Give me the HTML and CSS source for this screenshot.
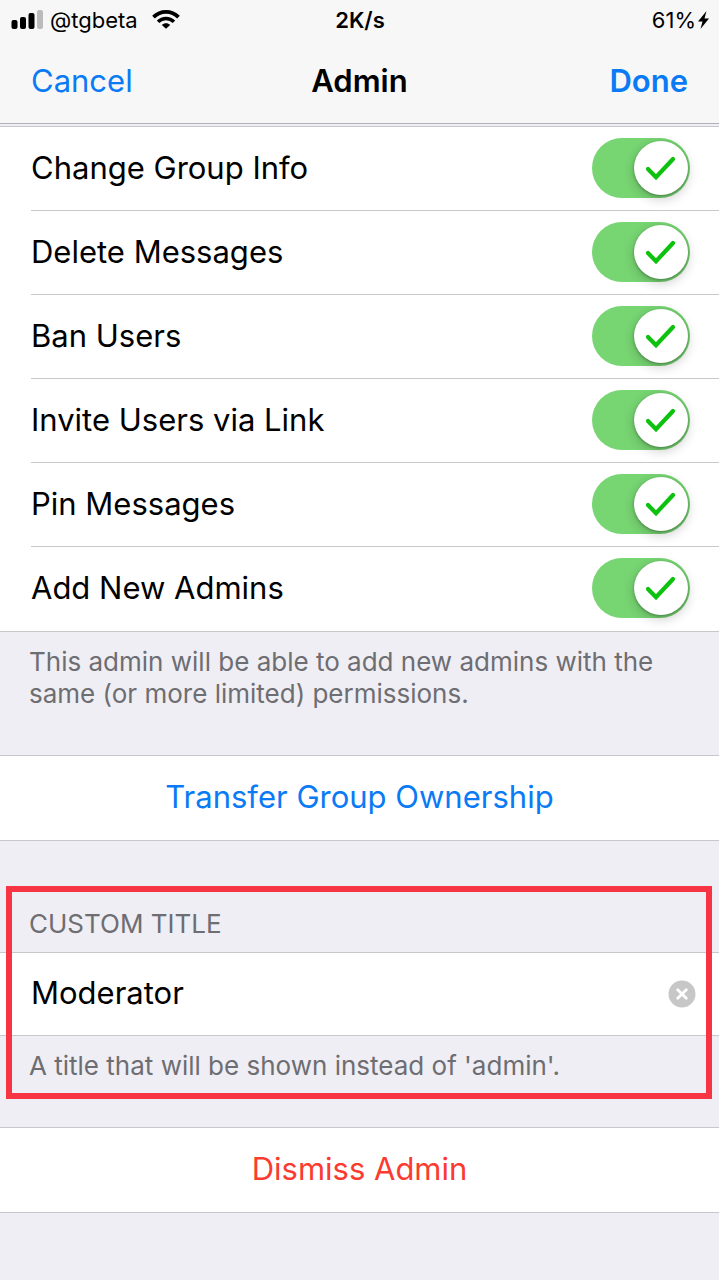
FILE: index.html
```html
<!DOCTYPE html>
<html lang="en">
<head>
    <meta charset="UTF-8">
    <meta name="viewport" content="width=device-width, initial-scale=1.0">
    <title>Admin</title>
    <link rel="stylesheet" href="styles.css">
</head>
<body>
    <svg class="symbols" aria-hidden="true">
        <symbol id="check" viewBox="0 0 54 54">
            <path d="M14 28l8 8.300L39 18" fill="none" stroke="#0dc20d" stroke-width="4.200" stroke-linecap="round"/>
        </symbol>
    </svg>

    <header>
        <div class="status">
            <div class="carrier">
                <svg width="33" height="20" viewBox="0 0 33 20" aria-hidden="true">
                    <rect x="0.500" y="10" width="6" height="9" rx="2"/>
                    <rect x="9" y="7" width="6" height="12" rx="2"/>
                    <rect x="17.500" y="3" width="6" height="16" rx="2"/>
                    <rect x="26" y="0" width="6" height="19" rx="2" fill="#bbb"/>
                </svg>
                <span>@tgbeta</span>
                <svg class="wifi" width="28" height="20" viewBox="0 0 28 20" aria-hidden="true">
                    <path d="M1.500 7.200C8.500 0.200 19.500 0.200 26.500 7.200" fill="none" stroke="#000" stroke-width="3.800"/>
                    <path d="M6 11.800c4.600-4.400 11.400-4.400 16 0" fill="none" stroke="#000" stroke-width="3.600"/>
                    <path d="M9.800 15c2.500-2.400 5.900-2.400 8.400 0L14 18.800z"/>
                </svg>
            </div>
            <strong>2K/s</strong>
            <div class="battery">
                <span>61%</span>
                <svg width="11" height="18" viewBox="0 0 11 18" aria-hidden="true">
                    <path d="M8.500 0L0 10.500h4.500L2.500 18 11 7.500H6.500z"/>
                </svg>
            </div>
        </div>
        <nav>
            <button type="button">Cancel</button>
            <h1>Admin</h1>
            <button type="button" class="done">Done</button>
        </nav>
    </header>

    <main>
        <section class="group">
            <div class="row">
                <label for="info">Change Group Info</label>
                <span class="switch"><input type="checkbox" id="info" checked><svg><use href="#check"/></svg></span>
            </div>
            <div class="row">
                <label for="delete">Delete Messages</label>
                <span class="switch"><input type="checkbox" id="delete" checked><svg><use href="#check"/></svg></span>
            </div>
            <div class="row">
                <label for="ban">Ban Users</label>
                <span class="switch"><input type="checkbox" id="ban" checked><svg><use href="#check"/></svg></span>
            </div>
            <div class="row">
                <label for="invite">Invite Users via Link</label>
                <span class="switch"><input type="checkbox" id="invite" checked><svg><use href="#check"/></svg></span>
            </div>
            <div class="row">
                <label for="pin">Pin Messages</label>
                <span class="switch"><input type="checkbox" id="pin" checked><svg><use href="#check"/></svg></span>
            </div>
            <div class="row">
                <label for="add">Add New Admins</label>
                <span class="switch"><input type="checkbox" id="add" checked><svg><use href="#check"/></svg></span>
            </div>
        </section>
        <p class="note">This admin will be able to add new admins with the same (or more limited) permissions.</p>

        <button type="button" class="action">Transfer Group Ownership</button>

        <section class="custom-title">
            <label class="caption" for="title">CUSTOM TITLE</label>
            <div class="field">
                <input type="text" id="title" value="Moderator">
                <button type="button" class="clear" aria-label="Clear">
                    <svg width="28" height="28" viewBox="0 0 28 28">
                        <circle cx="14" cy="14" r="13.500" fill="#c7c7c7"/>
                        <path d="M9.700 9.700l8.600 8.600M18.300 9.700l-8.600 8.600" stroke="#fff" stroke-width="2.800" stroke-linecap="round"/>
                    </svg>
                </button>
            </div>
            <p class="note">A title that will be shown instead of 'admin'.</p>
        </section>

        <button type="button" class="action dismiss">Dismiss Admin</button>
    </main>
</body>
</html>
```

FILE: styles.css
```css
* {
    box-sizing: border-box;
}

body {
    margin: 0;
    font-family: Inter, "Liberation Sans", sans-serif;
    font-size: 31px;
    line-height: 40px;
    color: #000;
    background-color: #efeef4;
}

button {
    padding: 0;
    border: 0;
    background: none;
    font: inherit;
    color: #0a7af5;
}

.symbols {
    position: absolute;
    width: 0;
    height: 0;
}

header {
    background-color: #f7f7f7;
    border-bottom: 1px solid #b2b2b6;
}

.status,
nav {
    display: grid;
    grid-template-columns: 1fr auto 1fr;
    align-items: center;
}

.status {
    padding: 0 10px 0 11px;
    font-size: 22px;
}

.status strong {
    font-weight: 600;
}

.carrier,
.battery {
    display: flex;
    align-items: center;
    gap: 6px;
}

.wifi {
    margin-left: 8px;
}

.battery {
    justify-content: flex-end;
    gap: 2px;
}

nav {
    padding: 21px 31px 22px;
}

nav button {
    justify-self: start;
}

nav .done {
    justify-self: end;
    font-weight: 600;
}

h1 {
    margin: 0;
    font-size: 31px;
    font-weight: 600;
}

.group {
    margin-top: 2px;
    background-color: #fff;
    border-top: 1px solid #c8c7cc;
    border-bottom: 1px solid #c8c7cc;
}

.row {
    display: flex;
    align-items: center;
    justify-content: space-between;
    height: 84px;
    margin-left: 31px;
    padding: 0 29px 2px 0;
    border-bottom: 1px solid #c8c7cc;
}

.row:last-child {
    border-bottom: 0;
}

.switch {
    position: relative;
    height: 60px;
}

.switch input {
    display: block;
    appearance: none;
    width: 98px;
    height: 60px;
    margin: 0;
    border-radius: 30px;
    background-color: #77d572;
}

.switch svg {
    position: absolute;
    top: 3px;
    right: 2px;
    width: 54px;
    height: 54px;
    border-radius: 50%;
    background-color: #fff;
    box-shadow: 0 4px 12px rgba(0, 0, 0, 0.2), 0 1px 3px rgba(0, 0, 0, 0.3);
    pointer-events: none;
}

.note {
    margin: 0;
    padding: 14px 29px 45px;
    font-size: 26px;
    line-height: 32px;
    color: #6d6d72;
}

.action {
    display: block;
    width: 100%;
    height: 86px;
    padding-bottom: 2px;
    background-color: #fff;
    border-top: 1px solid #c8c7cc;
    border-bottom: 1px solid #c8c7cc;
}

.dismiss {
    color: #fb3b30;
}

.custom-title {
    position: relative;
    padding-top: 63px;
}

/* red frame over the whole block */
.custom-title::after {
    content: "";
    position: absolute;
    inset: 45px 7px 28px 6px;
    border: 6px solid #f63444;
    pointer-events: none;
}

.caption {
    display: block;
    padding: 4px 29px 12px;
    font-size: 26px;
    line-height: 32px;
    color: #6d6d72;
}

.field {
    display: flex;
    align-items: center;
    height: 84px;
    padding: 0 23px 0 31px;
    background-color: #fff;
    border-top: 1px solid #c8c7cc;
    border-bottom: 1px solid #c8c7cc;
}

.field input {
    flex: 1;
    min-width: 0;
    padding: 0 0 2px;
    border: 0;
    outline: 0;
    font: inherit;
    color: inherit;
    background: none;
}

.clear {
    display: flex;
}
```
